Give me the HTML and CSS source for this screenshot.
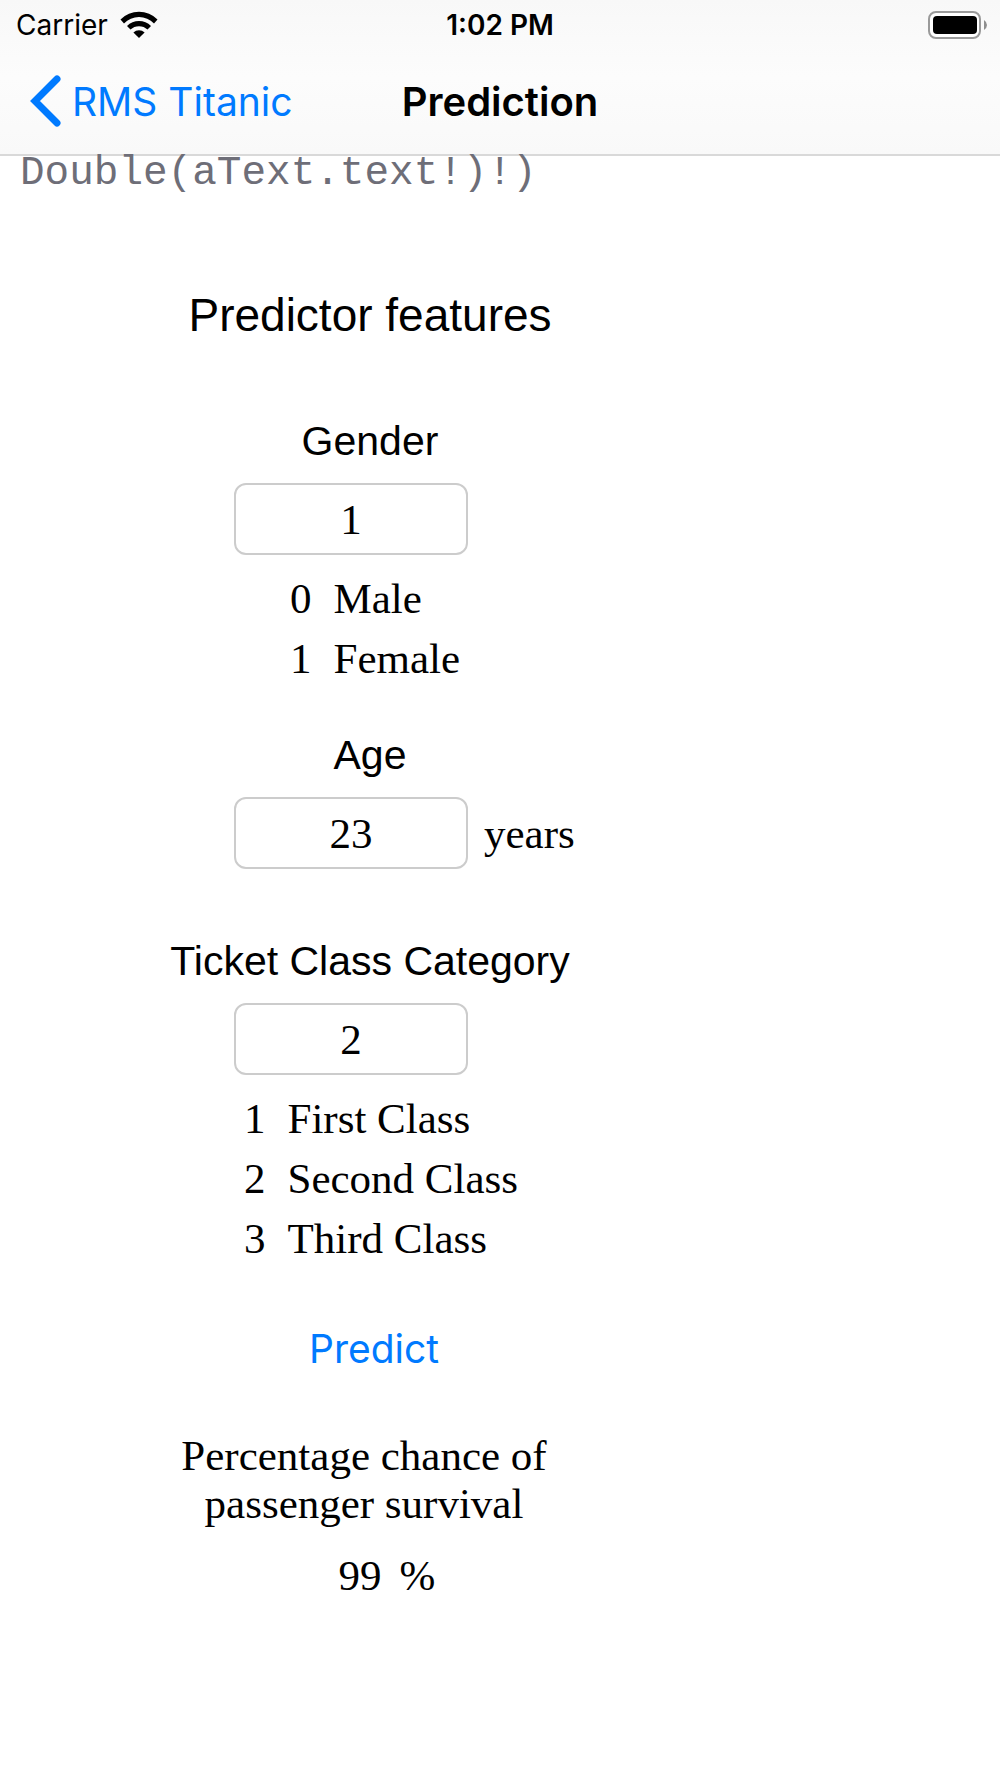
FILE: index.html
```html
<!DOCTYPE html>
<html lang="en">
<head>
    <meta charset="UTF-8">
    <meta name="viewport" content="width=device-width, initial-scale=1.0">
    <title>Prediction</title>
    <link rel="stylesheet" href="styles.css">
</head>
<body>
    <header class="top-bar">
        <div class="status-bar">
            <div class="carrier">
                <span>Carrier</span>
                <svg width="38" height="28" viewBox="0 0 38 28" aria-hidden="true">
                    <path d="M0.5 8.5 A26 26 0 0 1 37.5 8.5 L34 12.4 A21 21 0 0 0 4 12.4 Z"/>
                    <path d="M7 15 A17 17 0 0 1 31 15 L27.500 18.600 A12.200 12.200 0 0 0 10.500 18.600 Z"/>
                    <path d="M13.400 21.500 A8 8 0 0 1 24.600 21.500 L19 27 Z"/>
                </svg>
            </div>
            <span class="clock">1:02 PM</span>
            <div class="battery">
                <svg width="60" height="28" viewBox="0 0 60 28" aria-hidden="true">
                    <rect x="1" y="1" width="51" height="26" rx="7" fill="#fff" stroke="#9a9a9a" stroke-width="2"/>
                    <rect x="5" y="5" width="44" height="18" rx="4"/>
                    <path d="M56 9 Q59 11 59 14 T56 19 Z" fill="#8e8e8e"/>
                </svg>
            </div>
        </div>
        <nav class="nav-bar">
            <a href="#" class="back">
                <svg width="32" height="52" viewBox="0 0 32 52" aria-hidden="true">
                    <path d="M27 4 L5 26 L27 48" fill="none" stroke="#007aff" stroke-width="7" stroke-linecap="round" stroke-linejoin="miter"/>
                </svg>
                <span>RMS Titanic</span>
            </a>
            <h1>Prediction</h1>
        </nav>
    </header>

    <main>
        <code class="snippet">Double(aText.text!)!)</code>

        <form id="predict-form" class="predict-form">
            <h2>Predictor features</h2>

            <div class="form-group">
                <label for="gender">Gender</label>
                <div class="field">
                    <input type="text" id="gender" value="1" inputmode="numeric">
                </div>
                <ul class="options gender-options">
                    <li><span>0</span><span>Male</span></li>
                    <li><span>1</span><span>Female</span></li>
                </ul>
            </div>

            <div class="form-group">
                <label for="age">Age</label>
                <div class="field">
                    <input type="text" id="age" value="23" inputmode="numeric">
                    <span>years</span>
                </div>
            </div>

            <div class="form-group ticket-group">
                <label for="ticket">Ticket Class Category</label>
                <div class="field">
                    <input type="text" id="ticket" value="2" inputmode="numeric">
                </div>
                <ul class="options">
                    <li><span>1</span><span>First Class</span></li>
                    <li><span>2</span><span>Second Class</span></li>
                    <li><span>3</span><span>Third Class</span></li>
                </ul>
            </div>

            <button type="submit" class="predict-btn">Predict</button>
        </form>

        <section class="result">
            <p>Percentage chance of passenger survival</p>
            <output form="predict-form"><span>99</span><span>%</span></output>
        </section>
    </main>
</body>
</html>
```

FILE: styles.css
```css
* {
    margin: 0;
    padding: 0;
    box-sizing: border-box;
}

body {
    background-color: #fff;
    color: #000;
    font-family: "Liberation Serif", "Times New Roman", serif;
    font-size: 43px;
}

.top-bar {
    background: linear-gradient(#f8f8f8, #fcfcfc 50%, #f9f9f9);
    border-bottom: 2px solid #d9d9d9;
    font-family: Inter, sans-serif;
}

.status-bar,
.nav-bar {
    display: grid;
    grid-template-columns: 1fr auto 1fr;
    align-items: center;
}

.status-bar {
    height: 50px;
    padding: 0 12px;
    font-size: 28px;
}

.carrier {
    display: flex;
    align-items: center;
    gap: 12px;
    padding-left: 4px;
}

.clock {
    font-weight: 600;
}

.battery {
    display: flex;
    justify-content: flex-end;
}

.nav-bar {
    height: 104px;
    padding: 0 30px 2px;
    font-size: 39px;
}

.nav-bar h1 {
    font-size: 40px;
    font-weight: 600;
}

.back {
    display: flex;
    align-items: center;
    gap: 10px;
    color: #007aff;
    text-decoration: none;
}

.snippet {
    display: block;
    padding-left: 20px;
    color: #6e6e78;
    font-family: "Liberation Mono", "Courier New", monospace;
    font-size: 41px;
    line-height: 34px;
}

.predict-form {
    display: flex;
    flex-direction: column;
    width: 420px;
    margin: 98px 0 0 160px;
}

.predict-form h2 {
    margin-bottom: 75px;
    font-family: "Liberation Sans", Arial, sans-serif;
    font-size: 46px;
    font-weight: normal;
    line-height: 54px;
    text-align: center;
}

.form-group {
    margin-bottom: 42px;
}

.form-group label {
    display: block;
    margin-bottom: 18px;
    font-family: "Liberation Sans", Arial, sans-serif;
    font-size: 41px;
    line-height: 48px;
    text-align: center;
}

.field {
    display: flex;
    align-items: center;
    gap: 16px;
    padding-left: 74px;
}

.field input {
    width: 234px;
    height: 72px;
    flex-shrink: 0;
    border: 2px solid #ccc;
    border-radius: 12px;
    background-color: #fff;
    color: #000;
    font: inherit;
    text-align: center;
}

.options {
    margin-top: 14px;
    padding-left: 84px;
    list-style: none;
    line-height: 60px;
}

.gender-options {
    padding-left: 130px;
}

.options li {
    display: flex;
    gap: 22px;
}

.ticket-group {
    margin-top: 26px;
}

.predict-btn {
    align-self: center;
    margin-top: 14px;
    padding-left: 8px;
    border: none;
    background: none;
    color: #007aff;
    font-family: Inter, sans-serif;
    font-size: 39px;
    line-height: 48px;
    cursor: pointer;
}

.result {
    width: 408px;
    margin: 59px 0 100px 160px;
    line-height: 48px;
    text-align: center;
}

.result output {
    display: flex;
    justify-content: center;
    gap: 18px;
    margin-top: 24px;
    padding-left: 46px;
}
```
